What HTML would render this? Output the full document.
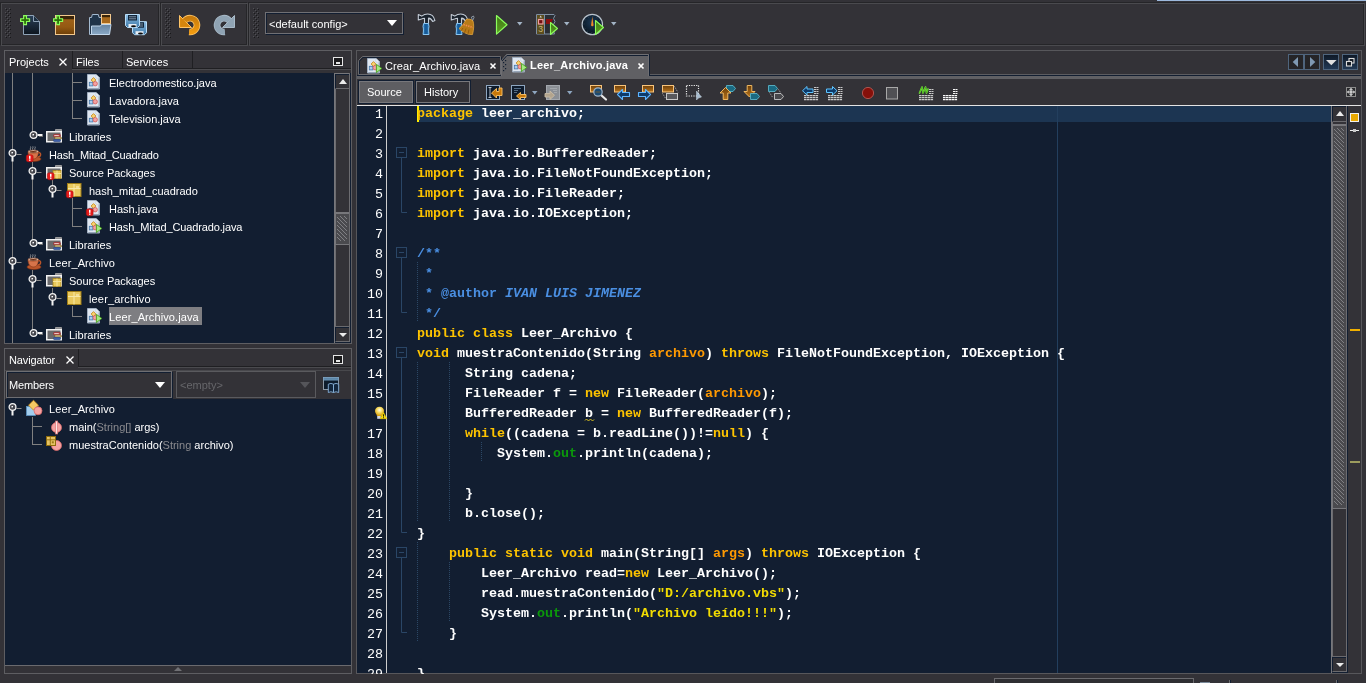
<!DOCTYPE html>
<html><head><meta charset="utf-8"><title>Leer_Archivo - NetBeans IDE</title>
<style>
html,body{margin:0;padding:0}
body{width:1366px;height:683px;overflow:hidden;position:relative;background:#333237;font-family:"Liberation Sans",sans-serif;font-size:11px;color:#fff}
.a{position:absolute}
.box{position:absolute;border:1px solid #4c4c50;box-sizing:border-box}
.grip{position:absolute;width:7px;height:31px;background-image:radial-gradient(circle at 1px 1px,#1c1c1f 0.9px,transparent 1.1px);background-size:4px 4px}
.grip:after{content:"";position:absolute;left:2px;top:2px;width:6px;height:28px;background-image:radial-gradient(circle at 1px 1px,#1c1c1f 0.9px,transparent 1.1px);background-size:4px 4px}
.navy{background:#121e31}
.hatch{background:repeating-linear-gradient(45deg,transparent 0 2.130px,#808084 2.130px 2.830px)}
.t,#code,#ln{will-change:transform}
.t{position:absolute;white-space:pre;line-height:14px;height:14px;color:#fff}
.sel{background:#7c7c80;padding:2px 1px 2px 1px;height:14px}
.g{color:#8a8a8e}
.ico{position:absolute;width:16px;height:16px}
svg{overflow:visible}
pre{margin:0}
#code{position:absolute;left:417px;top:104px;font-family:"Liberation Mono",monospace;font-weight:bold;font-size:13.33px;line-height:20px;color:#fff;white-space:pre}
#code .k{color:#fdc300}
#code .p{color:#ff9a02}
#code .s{color:#f2dc02}
#code .f{color:#0b990b}
#code .c{color:#4a8fe2}
#code .ci{color:#4a8fe2;font-style:italic}
#ln{position:absolute;left:353.400px;top:105px;width:30px;text-align:right;font-family:"Liberation Mono",monospace;font-size:13.330px;line-height:20px;color:#fff;white-space:pre}
</style></head><body>
<svg width="0" height="0" style="position:absolute"><defs>
<symbol id="jf" viewBox="0 0 16 16" overflow="visible">
  <path d="M1.500 .5h8.500l3.500 3.500v11h-12z" fill="#dfe7f1" stroke="#a2b0c2"/>
  <path d="M2.500 14.500h10.500v-10" fill="none" stroke="#8c9aae" stroke-width=".8"/>
  <path d="M10 .5v3.500h3.500z" fill="#f9fbff" stroke="#b8c6d6" stroke-width=".6"/>
  <rect x="3.300" y="8.300" width="3.600" height="3.600" fill="#a6cef0" stroke="#4676a8" stroke-width=".8"/>
  <rect transform="rotate(45 7.500 6)" x="5.800" y="4.300" width="3.400" height="3.400" fill="#f8d272" stroke="#c4861a" stroke-width=".8"/>
  <circle cx="9.200" cy="9.700" r="2.200" fill="#f4a2a2" stroke="#d05c5c" stroke-width=".8"/>
</symbol>
<symbol id="badge" viewBox="0 0 16 16" overflow="visible">
  <rect x=".3" y="8.800" width="6.800" height="7" rx="1.800" fill="#e41a1a" stroke="#b01010" stroke-width=".5"/>
  <rect x="3" y="9.800" width="1.500" height="3" fill="#fff"/><rect x="3" y="13.500" width="1.500" height="1.300" fill="#fff"/>
</symbol>
<symbol id="runarrow" viewBox="0 0 16 16" overflow="visible">
  <path d="M10.400 6.300l5.400 4.150l-5.400 4.150z" fill="#a4e884" stroke="#48a01c" stroke-width=".9" stroke-linejoin="round"/>
</symbol>
<symbol id="jfe" viewBox="0 0 16 16" overflow="visible"><use href="#jf"/><use href="#badge"/></symbol>
<symbol id="jfr" viewBox="0 0 16 16" overflow="visible"><use href="#jf"/><use href="#runarrow"/></symbol>
<symbol id="fold" viewBox="0 0 16 16" overflow="visible">
  <path d="M9.500 3v-1.500h6v2" fill="#8e8e90" stroke="#9a9a9c"/>
  <rect x=".75" y="3.750" width="14.500" height="10" fill="#6a6a6c" stroke="#f2f2f2" stroke-width="1.500"/>
</symbol>
<symbol id="lib" viewBox="0 0 16 16" overflow="visible"><use href="#fold"/>
  <rect x="7.500" y="6.300" width="7" height="2.700" rx="1" fill="#c24848" stroke="#8e2a2a" stroke-width=".5"/>
  <rect x="8.300" y="7.100" width="4.500" height="1" fill="#f1d0d0"/>
  <rect x="8.500" y="9" width="7" height="2.300" rx="1" fill="#a98c42" stroke="#6e5a2c" stroke-width=".5"/>
  <rect x="9.300" y="9.600" width="5" height=".8" fill="#e8dcae"/>
  <rect x="7.500" y="11.300" width="7" height="2.400" rx="1" fill="#3e5fa8" stroke="#25407a" stroke-width=".5"/>
</symbol>
<symbol id="pkgs" viewBox="0 0 16 16" overflow="visible">
  <rect x="0" y="0" width="8" height="8" fill="#e8c85a" stroke="#a8861c" stroke-width=".8"/>
  <path d="M0 3h8M4 0v8" stroke="#f7e6a0" stroke-width=".9"/>
</symbol>
<symbol id="src" viewBox="0 0 16 16" overflow="visible"><use href="#fold"/><use href="#pkgs" x="7" y="6.5"/></symbol>
<symbol id="srce" viewBox="0 0 16 16" overflow="visible"><use href="#src"/><use href="#badge" x="1"/></symbol>
<symbol id="pkg" viewBox="0 0 16 16" overflow="visible">
  <rect x="1.5" y="1.5" width="13.5" height="13" fill="#e9c95e" stroke="#9f7d16"/>
  <path d="M2 6.5h12.5M8 2v12.5" stroke="#f8e9a8" stroke-width="1"/>
  <rect x="10" y="4.5" width="3" height="1" fill="#fff6d0"/>
</symbol>
<symbol id="pkge" viewBox="0 0 16 16" overflow="visible"><use href="#pkg"/><use href="#badge"/></symbol>
<symbol id="prj" viewBox="0 0 16 16" overflow="visible">
  <path d="M4.5 .5c1 1.2-1 2 0 3.5M6.8 .3c1 1.2-1 2 0 3.5M9 .5c1 1.2-1 2 0 3.5" fill="none" stroke="#b9b9b9" stroke-width=".7"/>
  <ellipse cx="8" cy="13" rx="7" ry="2.6" fill="#b9552a" stroke="#7a2f12" stroke-width=".6"/>
  <path d="M12 6.5c3.5-.5 3.5 4 0 4.5" fill="none" stroke="#b9552a" stroke-width="1.4"/>
  <path d="M2 5.5h10.5c0 4-1.6 7.5-5.2 7.5s-5.300-3.500-5.300-7.500z" fill="#d6744a" stroke="#8c3a18" stroke-width=".7"/>
  <ellipse cx="7.200" cy="5.600" rx="5.200" ry="1.500" fill="#f0d8c8" stroke="#8c3a18" stroke-width=".6"/>
  <ellipse cx="7.200" cy="5.800" rx="3.800" ry=".9" fill="#6a2c10"/>
</symbol>
<symbol id="prje" viewBox="0 0 16 16" overflow="visible"><use href="#prj"/><use href="#badge"/></symbol>
<symbol id="hcol" viewBox="0 0 16 12" overflow="visible">
  <rect x="8.500" y="3" width="5" height="2" fill="#f4f4f4"/><rect x="10" y="5" width="4" height="1" fill="#6a6a6a"/>
  <circle cx="4.500" cy="4" r="3.400" fill="#4a4a50" stroke="#f4f4f4" stroke-width="1.300"/>
  <rect x="3.500" y="3" width="1.500" height="1.500" fill="#fff"/><path d="M5.200 4.600l1 1" stroke="#121e31" stroke-width="1"/>
</symbol>
<symbol id="hexp" viewBox="0 0 16 14" overflow="visible">
  <rect x="8.500" y="5" width="5" height="1" fill="#8a8a8a"/>
  <rect x="3.500" y="7.500" width="2" height="5" fill="#f4f4f4"/>
  <circle cx="4.500" cy="4" r="3.400" fill="#4a4a50" stroke="#f4f4f4" stroke-width="1.300"/>
  <rect x="3.500" y="3" width="1.500" height="1.500" fill="#fff"/><path d="M5.200 4.600l1 1" stroke="#121e31" stroke-width="1"/>
</symbol>
<symbol id="cls" viewBox="0 0 17 16" overflow="visible">
  <rect x=".5" y="6.500" width="9" height="9" fill="#a2cdee" stroke="#5c93c2" stroke-width=".8"/>
  <rect transform="rotate(45 7.500 5.200)" x="4" y="1.700" width="7" height="7" fill="#f3c863" stroke="#c08a20" stroke-width=".8"/>
  <circle cx="12" cy="10.800" r="4" fill="#f5a3a3" stroke="#d96a6a" stroke-width=".8"/>
</symbol>
<symbol id="mmain" viewBox="0 0 17 18" overflow="visible">
  <circle cx="10.500" cy="9.500" r="5" fill="#f5a3a3" stroke="#d96a6a" stroke-width=".8"/>
  <rect x="9.500" y="3" width="2.200" height="13" fill="#fde4e4" stroke="#d96a6a" stroke-width=".6"/>
</symbol>
<symbol id="mpkg" viewBox="0 0 17 18" overflow="visible">
  <circle cx="10.500" cy="9.500" r="5" fill="#f5a3a3" stroke="#d96a6a" stroke-width=".8"/>
  <rect x=".5" y=".5" width="9" height="9" fill="#e6c364" stroke="#8e6c0c" stroke-width="1"/>
  <path d="M1 3.800h8M4.300 1v8" stroke="#8e6c0c" stroke-width=".9"/>
  <rect x="5.800" y="5.300" width="2" height="2" fill="#9c7a18"/>
</symbol>
</defs></svg>
<!-- top strip -->
<div class="a" style="left:1157px;top:0;width:209px;height:1px;background:#9db9dd"></div>
<!-- toolbar groups (etched borders) -->
<div class="box" style="left:0px;top:2px;width:159px;height:43px;border-color:#252528"></div>
<div class="box" style="left:1px;top:3px;width:159px;height:43px;border-color:#4a4a4e"></div>
<div class="box" style="left:160px;top:2px;width:87px;height:43px;border-color:#252528"></div>
<div class="box" style="left:161px;top:3px;width:87px;height:43px;border-color:#4a4a4e"></div>
<div class="box" style="left:248px;top:2px;width:1116px;height:43px;border-color:#252528"></div>
<div class="box" style="left:249px;top:3px;width:1116px;height:43px;border-color:#4a4a4e"></div>
<svg class="a" style="left:5px;top:8px" width="7" height="31"><defs><pattern id="bump" width="4" height="4" patternUnits="userSpaceOnUse"><rect x="0" y="0" width="1" height="1" fill="#505055"/><rect x="1" y="1" width="1" height="1" fill="#18181a"/><rect x="2" y="2" width="1" height="1" fill="#505055"/><rect x="3" y="3" width="1" height="1" fill="#18181a"/></pattern></defs><rect width="6" height="30" fill="url(#bump)"/></svg>
<svg class="a" style="left:165px;top:8px" width="7" height="31"><rect width="6" height="30" fill="url(#bump)"/></svg>
<svg class="a" style="left:253px;top:8px" width="7" height="31"><rect width="6" height="30" fill="url(#bump)"/></svg>
<!-- combo -->
<div class="a" style="left:266px;top:13px;width:138px;height:22px;box-sizing:border-box;border:1px solid #121e31"></div>
<div class="a" style="left:265px;top:12px;width:138px;height:22px;box-sizing:border-box;border:1px solid #707074"><span class="t" style="left:3px;top:4px;letter-spacing:.03px">&lt;default config&gt;</span><div class="a" style="left:121px;top:7px;width:0;height:0;border-left:5.500px solid transparent;border-right:5.500px solid transparent;border-top:6px solid #fff"></div></div>
<!-- toolbar icons -->
<svg class="a" style="left:0;top:0" width="700" height="46" viewBox="0 0 700 46">
<defs>
<linearGradient id="gNavy" x1="0" y1="0" x2="0" y2="1"><stop offset="0" stop-color="#2a4058"/><stop offset="1" stop-color="#0d151e"/></linearGradient>
<linearGradient id="gOr" x1="0" y1="0" x2="0" y2="1"><stop offset="0" stop-color="#a2641a"/><stop offset=".6" stop-color="#955a12"/><stop offset="1" stop-color="#6e3f08"/></linearGradient>
<linearGradient id="gFlap" x1="0" y1="0" x2="0" y2="1"><stop offset="0" stop-color="#64829f"/><stop offset="1" stop-color="#8aa9c6"/></linearGradient>
<linearGradient id="gDisk" x1="0" y1="0" x2="0" y2="1"><stop offset="0" stop-color="#8fbfe4"/><stop offset="1" stop-color="#3c78a8"/></linearGradient>
<linearGradient id="gUndo" x1="0" y1="0" x2="0" y2="1"><stop offset="0" stop-color="#c87c0c"/><stop offset="1" stop-color="#f09a10"/></linearGradient>
<linearGradient id="gGreen" x1="0" y1="0" x2="0" y2="1"><stop offset="0" stop-color="#3f7a14"/><stop offset="1" stop-color="#5c9e22"/></linearGradient>
<linearGradient id="gHandle" x1="0" y1="0" x2="1" y2="0"><stop offset="0" stop-color="#2a7cc0"/><stop offset=".5" stop-color="#15558f"/><stop offset="1" stop-color="#2a7cc0"/></linearGradient>
<radialGradient id="gClock" cx=".5" cy=".4" r=".6"><stop offset="0" stop-color="#1c3a58"/><stop offset="1" stop-color="#08121c"/></radialGradient>
<g id="plus"><path d="M3.700 .6h2.800v3.100h3.100v2.800h-3.100v3.100h-2.800v-3.100h-3.100v-2.800h3.100z" fill="#3f8a12" stroke="#8cff5c" stroke-width="1.100"/><path d="M5.100 2v6.200M2 5.100h6.200" stroke="#2a6a0c" stroke-width="1.200"/></g>
<g id="hammer">
 <path d="M.8 1l3.400 1.600c1.800-1.400 3.800-2.100 6-2.100c4 0 6.400 2.800 7.200 6.600l-2.200 .9c-1-2.200-2.400-3.200-4.200-3.400v5.400h-4v-5.200c-1 0-2 .2-3 .6l-3.200 1.100z" fill="#1a222c" stroke="#c4ccd6" stroke-width="1.100" stroke-linejoin="round"/>
 <path d="M6.100 10h4.800l.6 3c-.5 2-.5 4.500 0 8h-6c.6-3.500 .6-6 0-8z" fill="url(#gHandle)" stroke="#86c4f2" stroke-width="1"/>
</g>
<g id="dd"><path d="M0 0h5.500l-2.750 3.600z" fill="#a3b4c6"/></g>
</defs>
<!-- new file -->
<path d="M23.500 15.500h10l6 6v13h-16z" fill="url(#gNavy)" stroke="#8ea2b6"/>
<path d="M33.500 15.500v6h6" fill="#1c2e40" stroke="#8ea2b6"/>
<use href="#plus" x="20" y="15"/>
<!-- new project -->
<rect x="55.500" y="15.500" width="19" height="19" fill="url(#gOr)" stroke="#f3c98e"/>
<rect x="56" y="16" width="18" height="3.200" fill="#3a2408"/>
<use href="#plus" x="53" y="15"/>
<!-- open project -->
<path d="M89.500 34.500v-17h2l.8-3h6l.8 3h2.400v17z" fill="#203449" stroke="#a4bad0"/>
<path d="M91.500 34.500v-8.500h9l1-1.500h9.500l-1.500 10z" fill="url(#gFlap)" stroke="#c2d8ec"/>
<rect x="101.500" y="14.500" width="9" height="9" fill="#a8691c" stroke="#f3c98e"/>
<rect x="102" y="15" width="8" height="2.200" fill="#3a2408"/>
<!-- save all -->
<defs><g id="disk"><path d="M125.500 14.500h14v11l-2 2h-10l-2-2z" fill="url(#gDisk)" stroke="#b9defa"/>
<rect x="128" y="15" width="9" height="5.500" fill="#10263c"/><path d="M129 16.800h7M129 18.800h7" stroke="#9fb2c4" stroke-width=".8"/>
<rect x="128.500" y="24" width="8" height="3" fill="#e8eef4"/><ellipse cx="133.500" cy="26.200" rx="2.500" ry="1" fill="#0a0a0a"/></g></defs>
<use href="#disk" x="7" y="7.200"/>
<use href="#disk"/>
<!-- undo -->
<path d="M184.600 20.800A6.900 6.900 0 1 1 189.200 31.900" fill="none" stroke="#ffc568" stroke-width="6.600"/>
<path d="M179.500 15.500v12h12z" fill="#e89410" stroke="#ffc568" stroke-linejoin="round"/>
<path d="M184.600 20.800A6.900 6.900 0 1 1 189.200 31.900" fill="none" stroke="url(#gUndo)" stroke-width="5"/>
<path d="M180.300 17v9.800h10z" fill="#d4850e"/>
<!-- redo -->
<g transform="translate(414 0) scale(-1 1)">
<path d="M184.600 20.800A6.900 6.900 0 1 1 189.200 31.900" fill="none" stroke="#a9bac8" stroke-width="6.600"/>
<path d="M179.500 15.500v12h12z" fill="#90a4b4" stroke="#a9bac8" stroke-linejoin="round"/>
<path d="M184.600 20.800A6.900 6.900 0 1 1 189.200 31.900" fill="none" stroke="#8fa3b3" stroke-width="5"/>
</g>
<!-- hammer -->
<use href="#hammer" x="417.500" y="13.500"/>
<!-- clean and build -->
<use href="#hammer" x="450.500" y="13.500"/>
<path d="M471.500 17l2 -1l.5 1.500l-1.500 3.500z" fill="#2a3644" stroke="#c4ccd6" stroke-width=".6"/>
<path d="M466 19.500c2-1 5-.5 7 1.500c1 3 1 8-.5 13.500c-4 .5-9-1.500-13.500-6c3-2.500 5.500-5.500 7-9z" fill="#b87a18" stroke="#f0b040" stroke-width=".7"/>
<path d="M463.500 24.500l9.500 3" stroke="#f08a50" stroke-width="1.600" stroke-dasharray="1.400 1"/>
<path d="M463 28l-2 3M466 28.500l-1.500 4.500M469 29.500l-1 4.500" stroke="#8a5608" stroke-width=".8"/>
<!-- run -->
<path d="M496.500 15.500l10.500 9.300l-10.500 9.300z" fill="url(#gGreen)" stroke="#8cff5c" stroke-width="1.200" stroke-linejoin="round"/>
<use href="#dd" x="517" y="22"/>
<!-- debug -->
<path d="M536.500 14.500h17.500l1 1l-1.500 3l1.500 3l-1.500 3l1.500 3l-1.500 3l1 3.500h-18z" fill="#2b2e34" stroke="#7f8fa2" stroke-width="1"/>
<rect x="537" y="15" width="7.500" height="19" fill="#5c4d1e"/>
<path d="M544.500 15v19" stroke="#7f8fa2"/>
<path d="M539.500 17.500l1.200-2l1.200 2z" fill="#d8d8d8"/>
<rect x="538.500" y="19.500" width="4.500" height="4.500" fill="#701010" stroke="#f0a0a0" stroke-width="1.200"/>
<text x="538.300" y="32" font-family="Liberation Sans,sans-serif" font-size="8.500" fill="#c8b878">3</text>
<path d="M546 19h7l-1.500 3l1 2h-6.500z" fill="#8a1010"/>
<path d="M550.500 22.500l7 6l-7 6z" fill="url(#gGreen)" stroke="#8cff5c" stroke-width="1.100" stroke-linejoin="round"/>
<use href="#dd" x="564" y="22"/>
<!-- profile -->
<circle cx="592.300" cy="24.500" r="10.200" fill="url(#gClock)" stroke="#b8c2cc" stroke-width="1.200"/>
<circle cx="592.300" cy="24.500" r="8.300" fill="none" stroke="#5d768e" stroke-width=".7" stroke-dasharray=".7 3.640"/>
<path d="M592.300 16.500l1.200 8.500a1.200 1.200 0 0 1 -2.400 0z" fill="#f08a28"/>
<path d="M595.500 20.500l8 7l-8 7z" fill="url(#gGreen)" stroke="#8cff5c" stroke-width="1.100" stroke-linejoin="round"/>
<use href="#dd" x="611" y="22"/>
</svg>
<!-- LEFT: Projects panel -->
<div class="box" style="left:4px;top:50px;width:348px;height:294px;border-color:#5e5e62"></div>
<!-- tabs -->
<div class="a" style="left:72px;top:51px;width:1px;height:18px;background:#1f1f22"></div>
<div class="a" style="left:122px;top:51px;width:1px;height:18px;background:#1f1f22"></div>
<div class="a" style="left:192px;top:51px;width:1px;height:18px;background:#1f1f22"></div>
<div class="a" style="left:72px;top:68px;width:279px;height:1px;background:#1f1f22"></div>
<div class="a" style="left:72px;top:69px;width:279px;height:1px;background:#4a4a4e"></div>
<span class="t" style="left:9px;top:55px">Projects</span>
<svg class="a" style="left:59px;top:58px" width="8" height="8"><path d="M.5 .5l7 7M7.500 .5l-7 7" stroke="#fff" stroke-width="1.300"/></svg>
<span class="t" style="left:76px;top:55px">Files</span>
<span class="t" style="left:126px;top:55px">Services</span>
<div class="a" style="left:333px;top:57px;width:10px;height:9px;box-sizing:border-box;border:1px solid #e6e6e6;background:#1b1b1d"><div class="a" style="left:2px;top:4px;width:4px;height:2px;background:#e6e6e6"></div></div>
<!-- tree -->
<div class="a navy" style="left:5px;top:73px;width:346px;height:270px"></div>
<div class="a" style="left:12px;top:73px;width:1px;height:270px;background:#808080"></div>
<div class="a" style="left:32px;top:73px;width:1px;height:59px;background:#808080"></div>
<div class="a" style="left:72px;top:73px;width:1px;height:46px;background:#808080"></div>
<div class="a" style="left:32px;top:162px;width:1px;height:78px;background:#808080"></div>
<div class="a" style="left:52px;top:180px;width:1px;height:6px;background:#808080"></div>
<div class="a" style="left:72px;top:198px;width:1px;height:29px;background:#808080"></div>
<div class="a" style="left:32px;top:270px;width:1px;height:60px;background:#808080"></div>
<div class="a" style="left:52px;top:288px;width:1px;height:6px;background:#808080"></div>
<div class="a" style="left:72px;top:306px;width:1px;height:11px;background:#808080"></div>
<div class="a" style="left:72px;top:82px;width:10px;height:1px;background:#808080"></div>
<svg class="ico" style="left:86px;top:74px"><use href="#jf"/></svg>
<span class="t" style="left:109px;top:76px;letter-spacing:0px">Electrodomestico.java</span>
<div class="a" style="left:72px;top:100px;width:10px;height:1px;background:#808080"></div>
<svg class="ico" style="left:86px;top:92px"><use href="#jf"/></svg>
<span class="t" style="left:109px;top:94px;letter-spacing:0.07px">Lavadora.java</span>
<div class="a" style="left:72px;top:118px;width:10px;height:1px;background:#808080"></div>
<svg class="ico" style="left:86px;top:110px"><use href="#jf"/></svg>
<span class="t" style="left:109px;top:112px;letter-spacing:0px">Television.java</span>
<svg class="a" style="left:28.5px;top:131px" width="16" height="12"><use href="#hcol"/></svg>
<svg class="ico" style="left:46px;top:128px"><use href="#lib"/></svg>
<span class="t" style="left:69px;top:130px;letter-spacing:0px">Libraries</span>
<svg class="a" style="left:8px;top:149px" width="16" height="14"><use href="#hexp"/></svg>
<svg class="ico" style="left:26px;top:146px"><use href="#prje"/></svg>
<span class="t" style="left:49px;top:148px;letter-spacing:-0.18px">Hash_Mitad_Cuadrado</span>
<svg class="a" style="left:28px;top:167px" width="16" height="14"><use href="#hexp"/></svg>
<svg class="ico" style="left:46px;top:164px"><use href="#srce"/></svg>
<span class="t" style="left:69px;top:166px;letter-spacing:0px">Source Packages</span>
<svg class="a" style="left:48px;top:185px" width="16" height="14"><use href="#hexp"/></svg>
<svg class="ico" style="left:66px;top:182px"><use href="#pkge"/></svg>
<span class="t" style="left:89px;top:184px;letter-spacing:0px">hash_mitad_cuadrado</span>
<div class="a" style="left:72px;top:208px;width:10px;height:1px;background:#808080"></div>
<svg class="ico" style="left:86px;top:200px"><use href="#jfe"/></svg>
<span class="t" style="left:109px;top:202px;letter-spacing:0px">Hash.java</span>
<div class="a" style="left:72px;top:226px;width:10px;height:1px;background:#808080"></div>
<svg class="ico" style="left:86px;top:218px"><use href="#jfr"/></svg>
<span class="t" style="left:109px;top:220px;letter-spacing:-0.13px">Hash_Mitad_Cuadrado.java</span>
<svg class="a" style="left:28.5px;top:239px" width="16" height="12"><use href="#hcol"/></svg>
<svg class="ico" style="left:46px;top:236px"><use href="#lib"/></svg>
<span class="t" style="left:69px;top:238px;letter-spacing:0px">Libraries</span>
<svg class="a" style="left:8px;top:257px" width="16" height="14"><use href="#hexp"/></svg>
<svg class="ico" style="left:26px;top:254px"><use href="#prj"/></svg>
<span class="t" style="left:49px;top:256px;letter-spacing:0.1px">Leer_Archivo</span>
<svg class="a" style="left:28px;top:275px" width="16" height="14"><use href="#hexp"/></svg>
<svg class="ico" style="left:46px;top:272px"><use href="#src"/></svg>
<span class="t" style="left:69px;top:274px;letter-spacing:0px">Source Packages</span>
<svg class="a" style="left:48px;top:293px" width="16" height="14"><use href="#hexp"/></svg>
<svg class="ico" style="left:66px;top:290px"><use href="#pkg"/></svg>
<span class="t" style="left:89px;top:292px;letter-spacing:0.15px">leer_archivo</span>
<div class="a" style="left:72px;top:316px;width:10px;height:1px;background:#808080"></div>
<svg class="ico" style="left:86px;top:308px"><use href="#jfr"/></svg>
<div class="a" style="left:109px;top:307px;width:93px;height:18px;background:#7e7e82"></div><span class="t" style="left:109px;top:310px;letter-spacing:0.1px">Leer_Archivo.java</span>
<svg class="a" style="left:28.5px;top:329px" width="16" height="12"><use href="#hcol"/></svg>
<svg class="ico" style="left:46px;top:326px"><use href="#lib"/></svg>
<span class="t" style="left:69px;top:328px;letter-spacing:0px">Libraries</span>

<!-- project scrollbar -->
<div class="a" style="left:334px;top:73px;width:17px;height:270px;background:#333237"></div>
<div class="a" style="left:334px;top:73px;width:1px;height:270px;background:#77777b"></div>
<div class="a" style="left:334px;top:73px;width:16px;height:1px;background:#77777b"></div>
<div class="a" style="left:349px;top:73px;width:1px;height:270px;background:#6c6c70"></div>
<div class="a" style="left:350px;top:73px;width:1px;height:270px;background:#121e31"></div>
<div class="a" style="left:335px;top:74px;width:14px;height:15px;box-sizing:border-box;border-top:1px solid #121e31;border-left:1px solid #121e31;border-bottom:1px solid #6a6a6e;background:#333237"><div class="a" style="left:3px;top:4px;border-left:4.500px solid transparent;border-right:4.500px solid transparent;border-bottom:5px solid #ececec"></div></div>
<div class="a" style="left:335px;top:326px;width:14px;height:1px;background:#6a6a6e"></div><div class="a" style="left:335px;top:327px;width:14px;height:15px;box-sizing:border-box;border-top:1px solid #121e31;border-left:1px solid #121e31;border-bottom:1px solid #6a6a6e;background:#333237"><div class="a" style="left:3px;top:5px;border-left:4.500px solid transparent;border-right:4.500px solid transparent;border-top:4.500px solid #ececec"></div></div><div class="a" style="left:335px;top:342px;width:15px;height:1px;background:#121e31"></div>
<div class="a" style="left:335px;top:89px;width:1px;height:237px;background:#6c6c70"></div>
<div class="a" style="left:335px;top:212px;width:14px;height:33px;box-sizing:border-box;border:1px solid #77777b;border-top-width:2px;border-right:none;background:#4a4a4e"><div class="a hatch" style="left:1px;top:2px;right:2px;bottom:3px"></div></div>

<!-- Navigator panel -->
<div class="box" style="left:4px;top:348px;width:348px;height:326px;border-color:#5e5e62"></div>
<div class="a" style="left:78px;top:349px;width:1px;height:18px;background:#1f1f22"></div>
<div class="a" style="left:78px;top:366px;width:273px;height:1px;background:#1f1f22"></div>
<div class="a" style="left:78px;top:367px;width:273px;height:1px;background:#4a4a4e"></div>
<span class="t" style="left:9px;top:353px;letter-spacing:-.1px">Navigator</span>
<svg class="a" style="left:66px;top:356px" width="8" height="8"><path d="M.5 .5l7 7M7.500 .5l-7 7" stroke="#fff" stroke-width="1.300"/></svg>
<div class="a" style="left:333px;top:355px;width:10px;height:9px;box-sizing:border-box;border:1px solid #e6e6e6;background:#1b1b1d"><div class="a" style="left:2px;top:4px;width:4px;height:2px;background:#e6e6e6"></div></div>
<div class="a" style="left:5px;top:370px;width:346px;height:1px;background:#48484c"></div>
<!-- combos -->
<div class="a" style="left:7px;top:372px;width:166px;height:27px;box-sizing:border-box;border:1px solid #121e31"></div><div class="a" style="left:6px;top:371px;width:166px;height:27px;box-sizing:border-box;border:1px solid #6e6e72"><span class="t" style="left:2px;top:6px;letter-spacing:-.15px">Members</span><div class="a" style="left:148px;top:10px;width:0;height:0;border-left:5.500px solid transparent;border-right:5.500px solid transparent;border-top:6px solid #fff"></div></div>
<div class="a" style="left:176px;top:371px;width:140px;height:27px;box-sizing:border-box;border:1px solid #5a5a5e"><span class="t" style="left:3px;top:6px;color:#66666a">&lt;empty&gt;</span><div class="a" style="left:123px;top:10px;width:0;height:0;border-left:5.500px solid transparent;border-right:5.500px solid transparent;border-top:6px solid #55555a"></div></div>
<svg class="a" style="left:322px;top:376px" width="18" height="18"><rect x="1.500" y="1.500" width="15" height="12" fill="#0e1c2c" stroke="#9aa6b2" stroke-width=".9"/><rect x="1.500" y="1.500" width="15" height="2.600" fill="#5c86a8" stroke="#7aa4c6" stroke-width=".6"/><path d="M6.300 8.200q2.600-1.600 5.200 0v8.300q-2.600-1.500-5.200 0z" fill="#13263c" stroke="#8ab4dc" stroke-width=".9"/><path d="M11.500 8.200q2.600-1.600 5.200 0v8.300q-2.600-1.500-5.200 0z" fill="#13263c" stroke="#8ab4dc" stroke-width=".9"/></svg>
<!-- nav tree -->
<div class="a navy" style="left:5px;top:399px;width:346px;height:266px"></div>
<div class="a" style="left:5px;top:665px;width:346px;height:1px;background:#6a6a6e"></div>
<div class="a" style="left:174px;top:667px;border-left:4px solid transparent;border-right:4px solid transparent;border-bottom:4px solid #707074"></div>
<div class="a" style="left:32px;top:417px;width:1px;height:28px;background:#808080"></div>
<div class="a" style="left:32px;top:426px;width:10px;height:1px;background:#808080"></div>
<div class="a" style="left:32px;top:444px;width:10px;height:1px;background:#808080"></div>
<svg class="a" style="left:8px;top:403px" width="16" height="14"><use href="#hexp"/></svg>
<svg class="a" style="left:26px;top:400px" width="17" height="16"><use href="#cls"/></svg>
<span class="t" style="left:49px;top:402px;letter-spacing:.1px">Leer_Archivo</span>
<svg class="a" style="left:46px;top:418px" width="17" height="18"><use href="#mmain"/></svg>
<span class="t" style="left:69px;top:420px">main(<span class="g">String[]</span> args)</span>
<svg class="a" style="left:46px;top:436px" width="17" height="18"><use href="#mpkg"/></svg>
<span class="t" style="left:69px;top:438px">muestraContenido(<span class="g">String</span> archivo)</span>

<!-- EDITOR -->
<div class="box" style="left:356px;top:50px;width:1006px;height:624px;border-color:#57575b"></div>
<!-- editor tabs -->
<div class="a" style="left:357px;top:76px;width:1004px;height:3px;background:#606064"></div>
<div class="a" style="left:357px;top:75px;width:1004px;height:1px;background:#121e31"></div>
<svg class="a" style="left:0;top:0" width="1366" height="82" viewBox="0 0 1366 82">
<!-- tab1 -->
<path d="M359.500 75.500V61.500l4-4H501.500V75.500z" fill="none" stroke="#121e31"/>
<path d="M358.500 74.500V60.500l4-4H500.500V74.500z" fill="#333237" stroke="#6a6a6e"/>
<path d="M359.500 74V61.300l3.500-3.800H500" fill="none" stroke="#121e31"/>
<!-- tab2 selected -->
<path d="M501.500 79V60.500l5-6H649V79z" fill="#606064"/>
<path d="M501.500 76V60.500l5-6H648.500V76" fill="none" stroke="#6e6e72"/>
<path d="M502 61l5-5.500H648M649.500 54V75" fill="none" stroke="#121e31"/><path d="M650 74.500H1361" stroke="#5c5c60"/>
<g fill="#121e31"><rect x="503" y="62" width="1.200" height="1.200"/><rect x="503" y="66" width="1.200" height="1.200"/><rect x="503" y="70" width="1.200" height="1.200"/><rect x="505" y="60" width="1.200" height="1.200"/><rect x="505" y="64" width="1.200" height="1.200"/><rect x="505" y="68" width="1.200" height="1.200"/></g>
<!-- close x -->
<path d="M490.500 63.500l5 5M495.500 63.500l-5 5" stroke="#fff" stroke-width="1.500"/>
<path d="M638.500 63.500l5 5M643.500 63.500l-5 5" stroke="#fff" stroke-width="1.700"/>
<!-- right nav buttons -->
<rect x="1288.500" y="54.500" width="15" height="15" fill="#252528" stroke="#4f657d"/>
<rect x="1304.500" y="54.500" width="15" height="15" fill="#252528" stroke="#4f657d"/>
<path d="M1298 57v10l-5.300-5z" fill="#7f99b3"/><path d="M1310 57v10l5.300-5z" fill="#7f99b3"/>
<rect x="1323.500" y="54.500" width="15" height="15" fill="url(#gBtn)" stroke="#4f657d"/>
<path d="M1326 60h10.600l-5.300 5.300z" fill="#e0e0e0"/>
<rect x="1342.500" y="54.500" width="15" height="15" fill="url(#gBtn)" stroke="#4f657d"/>
<rect x="1349" y="58.500" width="5" height="4.500" fill="#101822" stroke="#dcdcdc" stroke-width="1.100"/><rect x="1346.500" y="61.500" width="5" height="4.500" fill="#101822" stroke="#dcdcdc" stroke-width="1.100"/>
<defs><linearGradient id="gBtn" x1="0" y1="0" x2="0" y2="1"><stop offset="0" stop-color="#0e1826"/><stop offset="1" stop-color="#233a56"/></linearGradient></defs>
</svg>
<svg class="ico" style="left:366px;top:58px"><use href="#jfr"/></svg>
<svg class="ico" style="left:511px;top:57px"><use href="#jfr"/></svg>
<span class="t" style="left:385px;top:59px;letter-spacing:.1px">Crear_Archivo.java</span>
<span class="t" style="left:530px;top:58px;font-weight:bold;letter-spacing:.2px">Leer_Archivo.java</span>

<!-- editor toolbar -->
<div class="a" style="left:358px;top:80px;width:56px;height:24px;box-sizing:border-box;border:1px solid #121e31;background:#5e5e62"><div class="a" style="left:0;top:0;right:0;bottom:0;border:1px solid #77777b"></div><span class="t" style="left:8px;top:4px;font-size:11px">Source</span></div>
<div class="a" style="left:415px;top:80px;width:56px;height:24px;box-sizing:border-box;border:1px solid #121e31;background:#333237"><div class="a" style="left:0;top:0;right:0;bottom:0;border:1px solid #77777b"></div><span class="t" style="left:8px;top:4px;font-size:11px">History</span></div>
<svg class="a" style="left:0;top:80px" width="1366" height="25" viewBox="0 80 1366 25">
<defs>
<linearGradient id="gO2" x1="0" y1="0" x2="0" y2="1"><stop offset="0" stop-color="#6e3f08"/><stop offset="1" stop-color="#b8741c"/></linearGradient>
<g id="orect"><rect x=".5" y=".5" width="11" height="6.500" fill="url(#gO2)" stroke="#f8c47c"/></g>
<g id="ddg"><path d="M0 0h5.500l-2.750 3.600z" fill="#8ea6c0"/></g>
<g id="larr"><path d="M0 5l5-5v3h5.500v4h-5.500v3z"/></g>
<g id="rarr"><path d="M10.500 5l-5-5v3h-5.500v4h5.500v3z"/></g>
<g id="penta"><path d="M.5 .5h6.500l2.500 3l-2.500 3h-6.500z"/></g>
</defs>
<!-- 1 last edit -->
<rect x="486.500" y="85.500" width="13" height="14" fill="#0e1b2c" stroke="#8ea6c0"/>
<path d="M488.500 87.500h3M490 87.500v10M488.500 97.500h3" stroke="#dfe6ee" stroke-width=".8" fill="none"/>
<path d="M491.500 93l5-4.500v3h2.500v-3.500h3v7.500h-5.500v2.500z" fill="#c8780a" stroke="#ffc568" stroke-width=".9" stroke-linejoin="round"/>
<!-- 2 back -->
<rect x="511.500" y="85.500" width="13" height="14" fill="#0e1b2c" stroke="#8ea6c0"/>
<path d="M514 88.500h7M514 90.500h4M514 92.500h3" stroke="#66809c" stroke-width=".8"/>
<path d="M516.5 96.0l4 -3.5v2.0h5.5v3h-5.5v2.0z" fill="#c8780a" stroke="#ffc568" stroke-width=".9" stroke-linejoin="round"/>
<use href="#ddg" x="532" y="91"/>
<!-- 3 forward disabled -->
<rect x="546.500" y="85.500" width="13" height="14" fill="#8b8f95" stroke="#a4a8ae"/>
<path d="M550 88.500h7M553 90.500h4M554 92.500h3" stroke="#a9adb3" stroke-width=".8"/>
<path d="M554.5 95.25l-4.5 -4.25v2.5h-5.0v3.5h5.0v2.5z" fill="#b3a48d" stroke="#c7bba6" stroke-width=".9" stroke-linejoin="round"/>
<use href="#ddg" x="567" y="91"/>
<!-- 4 find selection -->
<use href="#orect" x="590" y="85"/>
<path d="M601 95l5 4.500" stroke="#e8e8e8" stroke-width="2.200" stroke-linecap="round"/>
<circle cx="598" cy="92" r="4.200" fill="#1b4a72" stroke="#9eb2c6" stroke-width="1.200"/>
<path d="M595.500 92h5" stroke="#6a5a3a" stroke-width="1"/>
<!-- 5 find prev -->
<use href="#orect" x="614" y="85"/>
<path d="M617.5 94.5l5 -5.0v3.0h7v4h-7v3.0z" fill="#0d3a6a" stroke="#5eb4ff" stroke-width="1.100" stroke-linejoin="round"/>
<!-- 6 find next -->
<use href="#orect" x="642" y="85"/>
<path d="M650.5 94.5l-5 -5.0v3.0h-7v4h7v3.0z" fill="#0d3a6a" stroke="#5eb4ff" stroke-width="1.100" stroke-linejoin="round"/>
<!-- 7 toggle highlight -->
<use href="#orect" x="662" y="85"/>
<rect x="666.500" y="93.500" width="11" height="6" fill="#58585c" stroke="#c8c8c8"/>
<path d="M662.500 93.500l3.500 5.500M674.500 86.500l3.500 6" stroke="#c8c8c8" stroke-width=".9" stroke-dasharray="1 1.200"/>
<!-- 8 rect selection -->
<rect x="686.500" y="85.500" width="12" height="10.500" fill="none" stroke="#f0f0f0" stroke-width="1.200" stroke-dasharray="1.200 1.200"/>
<path d="M696.500 91v9l2-2l3-1z" fill="#a8bccf" stroke="#c8d6e2" stroke-width=".5"/>
<!-- 9 prev bookmark -->
<use href="#penta" x="726" y="85" fill="#1a6a82" stroke="#5ab4c8" stroke-width=".9"/>
<path d="M725.500 87.500l5.500 5.500h-3.200v6.500h-4.600v-6.500h-3.200z" fill="url(#gO2)" stroke="#ffc568" stroke-width=".9"/>
<!-- 10 next bookmark -->
<path d="M749.500 97l5.500-5.500h-3.200v-6h-4.600v6h-3.200z" fill="url(#gO2)" stroke="#ffc568" stroke-width=".9"/>
<use href="#penta" x="750" y="93" fill="#1a6a82" stroke="#5ab4c8" stroke-width=".9"/>
<!-- 11 toggle bookmark -->
<use href="#penta" x="768" y="85" fill="#1a6a82" stroke="#5ab4c8" stroke-width=".9"/>
<use href="#penta" x="774" y="93" fill="#48484c" stroke="#c8c8c8" stroke-width=".9"/>
<path d="M769.500 92.500l3.500 5.500M778.500 89.500l2 3" stroke="#c8c8c8" stroke-width=".9" stroke-dasharray="1 1.200"/>
<!-- 12 shift left -->
<g stroke="#c8c8c8" stroke-width="1.200" stroke-dasharray="2.500 .4"><path d="M814 87.500h4.500M814 89.500h4.500M814 91.500h4.500M814 93.500h4.500M804 95.700h14.500M804 97.700h14.500M804 99.700h14.500"/></g>
<path d="M802.5 90.75l4.5 -4.25v2.5h6.0v3.5h-6.0v2.5z" fill="#0d3a6a" stroke="#5ec4ff" stroke-width="1" stroke-linejoin="round"/>
<!-- 13 shift right -->
<g stroke="#c8c8c8" stroke-width="1.200" stroke-dasharray="2.500 .4"><path d="M838 87.500h4.500M838 89.500h4.500M838 91.500h4.500M838 93.500h4.500M828 95.700h14.500M828 97.700h14.500M828 99.700h14.500"/></g>
<path d="M837.0 90.75l-4.5 -4.25v2.5h-6.0v3.5h6.0v2.5z" fill="#0d3a6a" stroke="#5ec4ff" stroke-width="1" stroke-linejoin="round"/>
<!-- 14 record -->
<circle cx="868" cy="93" r="5.600" fill="#86100a" stroke="#b85a54" stroke-width=".9"/>
<!-- 15 stop -->
<rect x="886.500" y="87.500" width="11" height="11.500" fill="#505054" stroke="#a8a8a8"/>
<!-- 16 comment -->
<g stroke="#c8c8c8" stroke-width="1.200" stroke-dasharray="2.500 .4"><path d="M929 89.500h4.500M929 91.500h4.500M929 93.500h4.500M919 95.700h14.500M919 97.700h14.500M919 99.700h14.500"/></g>
<path d="M919.500 93l2.500-6l1 6l2.500-6l1 6l1.500-4" fill="none" stroke="#7cf03c" stroke-width="1.600" stroke-linejoin="round" stroke-linecap="round"/>
<path d="M919.500 93l2.500-6l1 6l2.500-6l1 6l1.500-4" fill="none" stroke="#2c8a10" stroke-width=".5" stroke-linejoin="round"/>
<!-- 17 uncomment -->
<g stroke="#f8f8f8" stroke-width="1.200" stroke-dasharray="2.500 .4"><path d="M953 89.500h4.500M953 91.500h4.500M953 93.500h4.500M943 95.700h14.500M943 97.700h14.500M943 99.700h14.500"/></g>
<!-- right: split icon -->
<rect x="1346.500" y="87.500" width="9" height="9" fill="#2a2a2d" stroke="#8c8c8c"/>
<path d="M1351 88.500v7M1347.500 92h7" stroke="#f4f4f4" stroke-width="1.200"/><path d="M1349.500 90l1.500-1.500l1.500 1.500M1349.500 94l1.500 1.500l1.500-1.500M1349 90.500l-1.500 1.500l1.500 1.500M1353 90.500l1.500 1.500l-1.500 1.500" fill="none" stroke="#f4f4f4" stroke-width=".9"/>
</svg>

<div class="a navy" style="left:357px;top:106px;width:974px;height:567px"></div>
<div class="a" style="left:357px;top:105px;width:1004px;height:1px;background:#e4e4e4"></div>
<div class="a" style="left:386px;top:106px;width:1px;height:567px;background:#cdcdcd"></div>
<div class="a" style="left:419px;top:106px;width:912px;height:16px;background:#1c3552"></div>
<div class="a" style="left:417px;top:106px;width:2px;height:16px;background:#ffee00"></div>
<div class="a" style="left:1057px;top:106px;width:1px;height:567px;background:#233f5e"></div>
<!-- fold marks -->
<svg class="a" style="left:387px;top:106px" width="36" height="567" viewBox="387 106 36 567">
<g fill="none" stroke="#2a4666" stroke-width="1">
<path d="M401.500 158V212.5h5.500"/><rect x="396.500" y="147.5" width="10" height="10" fill="#121e31"/><path d="M399 152.5h5"/>
<path d="M401.500 258V312.5h5.500"/><rect x="396.500" y="247.5" width="10" height="10" fill="#121e31"/><path d="M399 252.5h5"/>
<path d="M401.500 358V532.5h5.500"/><rect x="396.500" y="347.5" width="10" height="10" fill="#121e31"/><path d="M399 352.5h5"/>
<path d="M401.500 558V632.5h5.500"/><rect x="396.500" y="547.5" width="10" height="10" fill="#121e31"/><path d="M399 552.5h5"/>
</g>
</svg>
<!-- indent guides -->
<svg class="a" style="left:410px;top:106px" width="120" height="567" viewBox="410 106 120 567">
<g stroke="#2c4866" stroke-width="1" stroke-dasharray="1 1">
<path d="M417.500 262V322"/>
<path d="M417.500 362V522M449.500 362V522M481.500 442V462"/>
<path d="M417.500 542V642M449.500 562V622"/>
</g></svg>
<!-- hint bulb on line 16 -->
<svg class="a" style="left:374px;top:406px" width="14" height="14" viewBox="0 0 14 14">
<defs><radialGradient id="gBulb" cx=".5" cy=".35" r=".6"><stop offset="0" stop-color="#fffce8"/><stop offset=".45" stop-color="#f6de6a"/><stop offset="1" stop-color="#d8a010"/></radialGradient></defs>
<rect x="3.200" y="9.500" width="3.600" height="3.300" fill="#d4d8e4"/>
<path d="M5.500 .8c2.800 0 4.500 1.900 4.500 4.200c0 2-1.500 2.800-2 5h-5c-.5-2.200-2-3-2-5c0-2.300 1.700-4.200 4.500-4.200z" fill="url(#gBulb)"/>
<path d="M9.500 6.300l3.300 6.400h-6.600z" fill="#f4dc10" stroke="#e8c800" stroke-width=".6" stroke-linejoin="round"/>
<path d="M9.500 8.300v2.300M9.500 11.300v.9" stroke="#2a2400" stroke-width="1"/>
</svg>
<!-- wavy underline under b on line 16 -->
<svg class="a" style="left:585px;top:418px" width="10" height="4" viewBox="0 0 10 4"><path d="M0 2.500l1.500-1.500l2 2l2-2l2 2l1.500-1.500" fill="none" stroke="#d8c020" stroke-width="1"/></svg>

<pre id="ln">1
2
3
4
5
6
7
8
9
10
11
12
13
14
15

17
18
19
20
21
22
23
24
25
26
27
28
29</pre>
<pre id="code"><span class="k">package</span> leer_archivo;

<span class="k">import</span> java.io.BufferedReader;
<span class="k">import</span> java.io.FileNotFoundException;
<span class="k">import</span> java.io.FileReader;
<span class="k">import</span> java.io.IOException;

<span class="c">/**</span>
<span class="c"> *</span>
<span class="c"> * @author </span><span class="ci">IVAN LUIS JIMENEZ</span>
<span class="c"> */</span>
<span class="k">public</span> <span class="k">class</span> Leer_Archivo {
<span class="k">void</span> muestraContenido(String <span class="p">archivo</span>) <span class="k">throws</span> FileNotFoundException, IOException {
      String cadena;
      FileReader f = <span class="k">new</span> FileReader(<span class="p">archivo</span>);
      BufferedReader b = <span class="k">new</span> BufferedReader(f);
      <span class="k">while</span>((cadena = b.readLine())!=<span class="k">null</span>) {
          System.<span class="f">out</span>.println(cadena);

      }
      b.close();
}
    <span class="k">public</span> <span class="k">static</span> <span class="k">void</span> main(String[] <span class="p">args</span>) <span class="k">throws</span> IOException {
        Leer_Archivo read=<span class="k">new</span> Leer_Archivo();
        read.muestraContenido(<span class="s">"D:/archivo.vbs"</span>);
        System.<span class="f">out</span>.println(<span class="s">"Archivo leído!!!"</span>);
    }

}</pre>
<!-- editor scrollbar -->
<div class="a" style="left:1331px;top:106px;width:17px;height:567px;background:#333237"></div>
<div class="a" style="left:1331px;top:106px;width:1px;height:567px;background:#77777b"></div>
<div class="a" style="left:1346px;top:106px;width:1px;height:567px;background:#6c6c70"></div>
<div class="a" style="left:1347px;top:106px;width:1px;height:567px;background:#121e31"></div>
<div class="a" style="left:1332px;top:106px;width:14px;height:16px;box-sizing:border-box;border-top:1px solid #121e31;border-left:1px solid #121e31;border-bottom:1px solid #6a6a6e;background:#333237"><div class="a" style="left:3px;top:4px;border-left:4.500px solid transparent;border-right:4.500px solid transparent;border-bottom:5px solid #ececec"></div></div>
<div class="a" style="left:1332px;top:656px;width:14px;height:1px;background:#6a6a6e"></div><div class="a" style="left:1332px;top:657px;width:14px;height:15px;box-sizing:border-box;border-top:1px solid #121e31;border-left:1px solid #121e31;border-bottom:1px solid #6a6a6e;background:#333237"><div class="a" style="left:3px;top:5px;border-left:4.500px solid transparent;border-right:4.500px solid transparent;border-top:4.500px solid #ececec"></div></div><div class="a" style="left:1332px;top:672px;width:15px;height:1px;background:#121e31"></div>
<div class="a" style="left:1332px;top:122px;width:1px;height:534px;background:#6c6c70"></div>
<div class="a" style="left:1332px;top:124px;width:14px;height:385px;box-sizing:border-box;border:1px solid #77777b;border-top-width:2px;border-right:none;background:#4a4a4e"><div class="a hatch" style="left:1px;top:2px;right:2px;bottom:3px"></div></div>
<!-- error stripe -->
<div class="a" style="left:1348px;top:106px;width:13px;height:567px;background:#333237"></div>
<div class="a" style="left:1350px;top:113px;width:9px;height:9px;box-sizing:border-box;border:1px solid #f0f0f0;background:#e8a800"></div>
<div class="a" style="left:1350px;top:130px;width:9px;height:1px;background:#f0f0f0"></div>
<div class="a" style="left:1353px;top:129px;width:3px;height:3px;background:#c8c8c8"></div>
<div class="a" style="left:1350px;top:329px;width:10px;height:2px;background:#f0b000"></div>
<div class="a" style="left:1350px;top:461px;width:10px;height:2px;background:#9c9c5e"></div>

<!-- status bar -->
<div class="a" style="left:0;top:674px;width:1366px;height:9px;background:#333237"></div>
<div class="a" style="left:994px;top:678px;width:200px;height:8px;box-sizing:border-box;border:1px solid #6a6a6e;background:#2e2e32"></div>
<div class="a" style="left:1200px;top:682px;width:10px;height:2px;background:#7a8a9a"></div>
<div class="a" style="left:1229px;top:680px;width:1px;height:3px;background:#6a6a6e"></div><div class="a" style="left:1230px;top:680px;width:1px;height:3px;background:#121e31"></div>
<div class="a" style="left:1336px;top:680px;width:1px;height:3px;background:#6a6a6e"></div><div class="a" style="left:1337px;top:680px;width:1px;height:3px;background:#121e31"></div>

</body></html>
